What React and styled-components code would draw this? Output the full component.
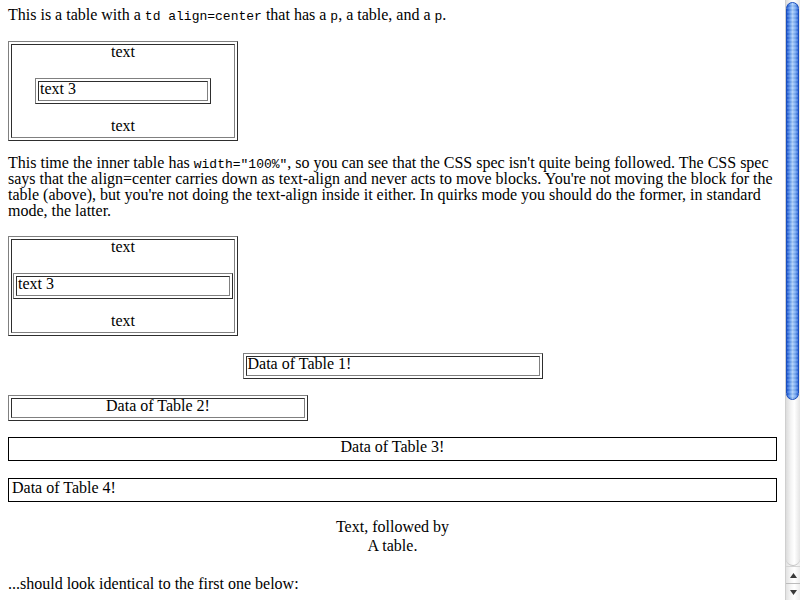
import styled, { createGlobalStyle } from "styled-components";

const GlobalStyle = createGlobalStyle`
  html, body {
    margin: 0;
    padding: 0;
    background: #fff;
    overflow: hidden;
  }
  body {
    font-family: "Liberation Serif", "Times New Roman", serif;
    font-size: 16px;
    line-height: 16px;
    color: #000;
  }
`;

const Screen = styled.div`
  display: flex;
  width: 800px;
  height: 600px;
  overflow: hidden;
`;

const Page = styled.div`
  flex: 0 0 785px;
  box-sizing: border-box;
  padding: 9px 8px 0;
  overflow: hidden;
`;

// old renderer sits glyphs ~2px higher in the line box
const P = styled.p`
  position: relative;
  top: -2px;
  margin: 0 0 ${(p) => p.$mb ?? 16}px;
`;

const Txt = styled.span`
  position: relative;
  top: -2px;
`;

const CellP = styled.p`
  margin: 0;
`;

const Code = styled.code`
  font-family: "Liberation Mono", "Courier New", monospace;
  font-size: 13px;
  line-height: 12px;
`;

const BevelTable = styled.table`
  border-collapse: separate;
  border-spacing: 2px;
  border: 1px solid;
  border-color: #808080 #2e2e2e #2e2e2e #808080;
  width: ${(p) => p.$width};
  margin: ${(p) => (p.$center ? "0 auto" : "0")};
  margin-bottom: ${(p) => p.$mb ?? 0}px;
`;

const InnerTable = styled(BevelTable)`
  margin: 16px auto;
`;

const BevelCell = styled.td`
  border: 1px solid;
  border-color: #2e2e2e #808080 #808080 #2e2e2e;
  padding: 1px;
  text-align: ${(p) => p.$align || "left"};
  vertical-align: middle;
`;

const PlainTable = styled.table`
  border-collapse: separate;
  border-spacing: 2px;
  border: 1px solid #000;
  width: 100%;
  margin-bottom: ${(p) => p.$mb ?? 0}px;
`;

const PlainCell = styled.td`
  padding: 1px;
  text-align: ${(p) => p.$align || "left"};
`;

const CenterBlock = styled.div`
  position: relative;
  top: -2px;
  text-align: center;
  margin-bottom: 19px;
`;

const BareTable = styled.table`
  border-collapse: separate;
  border-spacing: 2px;
  margin: 0 auto;
`;

const BareCell = styled.td`
  padding: 1px;
`;

/* scrollbar chrome */
const ScrollBar = styled.div`
  flex: 0 0 15px;
  height: 600px;
  display: flex;
  flex-direction: column;
  box-sizing: border-box;
  border-left: 1px solid #cfcfcf;
  background: linear-gradient(to right, #e2e2e2, #f6f6f6 35%, #ffffff 60%, #ececec);
`;

const Track = styled.div`
  flex: 1;
  display: flex;
  flex-direction: column;
  padding: 2px 1px 0 0;
  border-bottom: 1px solid #c4c4c4;
  border-radius: 0 0 7px 7px;
  background: linear-gradient(to right, #dcdcdc, #f4f4f4 35%, #ffffff 60%, #e4e4e4);
`;

const Thumb = styled.div`
  height: 398px;
  box-sizing: border-box;
  border: 1px solid #1a4fbd;
  border-radius: 7px;
  background:
    repeating-linear-gradient(to bottom, rgba(255, 255, 255, 0.12) 0 2px, rgba(0, 0, 0, 0.04) 2px 4px),
    linear-gradient(to right, #1f58d6, #5c96ee 25%, #a9cdfa 50%, #78aaf3 75%, #2d68dc);
`;

const ArrowBox = styled.div`
  height: 16px;
  display: flex;
  align-items: center;
  justify-content: center;
  border-top: 1px solid ${(p) => (p.$first ? "#d4d4d4" : "#bcbcbc")};
`;

const Arrow = ({ up }) => (
  <svg width="7" height="5" viewBox="0 0 7 5">
    <path d={up ? "M3.5 0 L7 5 L0 5 Z" : "M0 0 L7 0 L3.5 5 Z"} fill="#3a3a3a" />
  </svg>
);

const NestedDemo = ({ innerWidth, mb }) => (
  <BevelTable $width="230px" $mb={mb}>
    <tbody>
      <tr>
        <BevelCell $align="center">
          <CellP>
            <Txt>text</Txt>
          </CellP>
          <InnerTable $width={innerWidth}>
            <tbody>
              <tr>
                <BevelCell>
                  <Txt>text 3</Txt>
                </BevelCell>
              </tr>
            </tbody>
          </InnerTable>
          <CellP>
            <Txt>text</Txt>
          </CellP>
        </BevelCell>
      </tr>
    </tbody>
  </BevelTable>
);

export default function App() {
  return (
    <Screen>
      <GlobalStyle />
      <Page>
        <P>
          This is a table with a <Code>td align=center</Code> that has a <Code>p</Code>, a table, and a <Code>p</Code>.
        </P>

        <NestedDemo innerWidth="80%" mb={16} />

        <P $mb={15}>
          This time the inner table has <Code>width="100%"</Code>, so you can see that the CSS spec isn't quite being
          followed. The CSS spec says that the align=center carries down as text-align and never acts to move blocks.
          You're not moving the block for the table (above), but you're not doing the text-align inside it either. In
          quirks mode you should do the former, in standard mode, the latter.
        </P>

        <NestedDemo innerWidth="100%" mb={17} />

        <BevelTable $width="300px" $center $mb={16}>
          <tbody>
            <tr>
              <BevelCell>
                <Txt>Data of Table 1!</Txt>
              </BevelCell>
            </tr>
          </tbody>
        </BevelTable>

        <BevelTable $width="300px" $mb={16}>
          <tbody>
            <tr>
              <BevelCell $align="center">
                <Txt>Data of Table 2!</Txt>
              </BevelCell>
            </tr>
          </tbody>
        </BevelTable>

        <PlainTable $mb={17}>
          <tbody>
            <tr>
              <PlainCell $align="center">
                <Txt>Data of Table 3!</Txt>
              </PlainCell>
            </tr>
          </tbody>
        </PlainTable>

        <PlainTable $mb={19}>
          <tbody>
            <tr>
              <PlainCell>
                <Txt>Data of Table 4!</Txt>
              </PlainCell>
            </tr>
          </tbody>
        </PlainTable>

        <CenterBlock>
          Text, followed by
          <BareTable>
            <tbody>
              <tr>
                <BareCell>A table.</BareCell>
              </tr>
            </tbody>
          </BareTable>
        </CenterBlock>

        <P>...should look identical to the first one below:</P>
      </Page>

      <ScrollBar>
        <Track>
          <Thumb />
        </Track>
        <ArrowBox $first>
          <Arrow up />
        </ArrowBox>
        <ArrowBox>
          <Arrow />
        </ArrowBox>
      </ScrollBar>
    </Screen>
  );
}
